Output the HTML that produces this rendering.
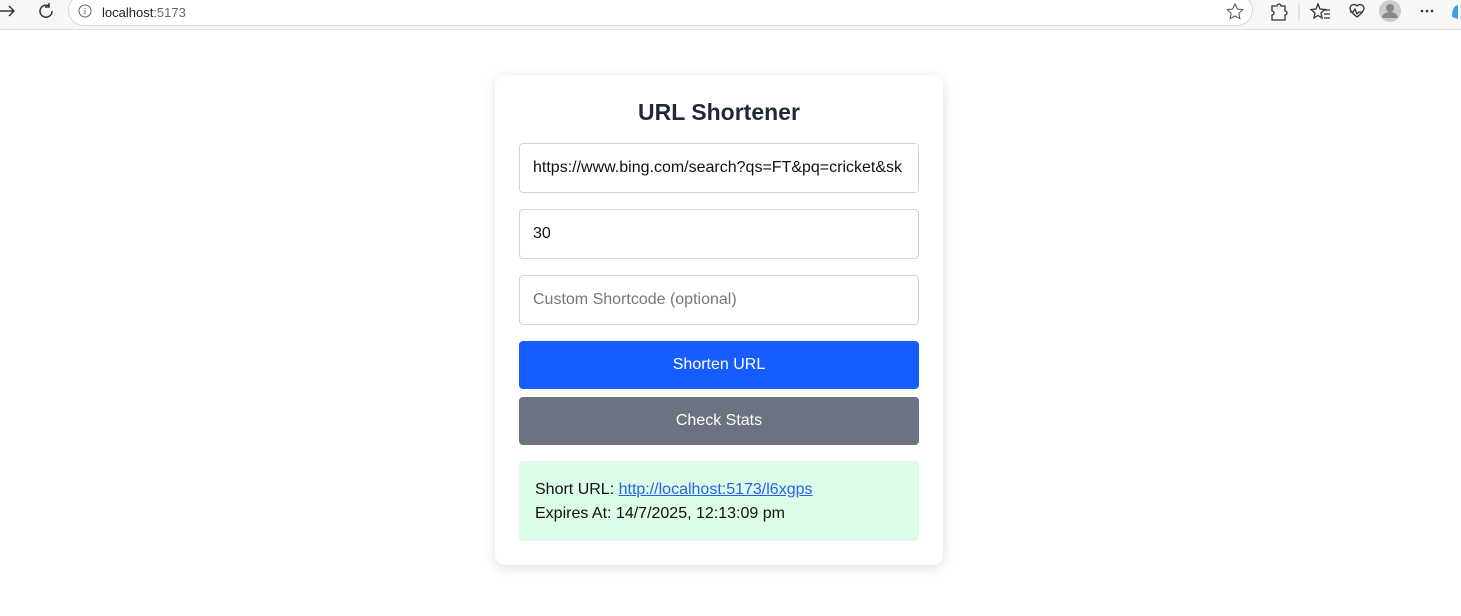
<!DOCTYPE html>
<html><head><meta charset="utf-8"><style>
*{box-sizing:border-box;margin:0;padding:0}
body{width:1461px;height:616px;background:#fff;font-family:"Liberation Sans",sans-serif;position:relative;overflow:hidden}
.bar{position:absolute;left:0;top:0;width:1461px;height:30px;background:#f7f7f7;border-bottom:1px solid #e3e3e3}
.url{position:absolute;left:68px;top:-6px;width:1185px;height:32px;background:#fff;border:1px solid #d6d6d6;border-radius:16px}
.url span{position:absolute;left:33px;top:10px;font-size:13px;color:#222}
.card{position:absolute;left:495px;top:75px;width:448px;height:490px;background:#fff;border-radius:10px;box-shadow:0 3px 12px rgba(0,0,0,.12)}
h1{position:absolute;left:0;width:448px;top:24px;text-align:center;font-size:23px;font-weight:bold;color:#1f2937}
.in{position:absolute;left:24px;width:400px;height:50px;border:1px solid #d1d5db;border-radius:4px;font-size:16px;color:#111;padding:15px 0 0 13px;white-space:nowrap;overflow:hidden}
.btn{position:absolute;left:24px;width:400px;height:48px;border-radius:4px;color:#fff;font-size:16px;text-align:center;line-height:48px}
.res{position:absolute;left:24px;top:386px;width:400px;height:80px;background:#dcfce7;border-radius:4px;padding:17px 16px;font-size:16px;line-height:24px;color:#111}
.res a{color:#2563eb;text-decoration:underline}
</style></head><body>
<div class="bar">
<svg style="position:absolute;left:0;top:0" width="60" height="22"><path d="M0 11h14M9 6l5 5-5 5" stroke="#333" stroke-width="1.5" fill="none"/><path d="M49 6a6 6 0 1 0 3 5M49 3v4h-4" stroke="#333" stroke-width="1.5" fill="none"/></svg>
<div class="url"><svg style="position:absolute;left:9px;top:9px" width="14" height="14"><circle cx="7" cy="7" r="6" stroke="#666" fill="none"/><path d="M7 6v4M7 4v1" stroke="#666"/></svg><span>localhost<span style="position:static;color:#666">:5173</span></span>
<svg style="position:absolute;right:8px;top:8px" width="18" height="18"><path d="M9 1l2.4 5 5.4.6-4 3.7 1.1 5.4L9 13l-4.9 2.7 1.1-5.4-4-3.7 5.4-.6z" stroke="#555" fill="none"/></svg></div>
<svg style="position:absolute;left:1268px;top:0" width="190" height="24"><path d="M4 6h5a2 2 0 0 1 4 0h4v5a2 2 0 0 1 0 4v5H4v-5a2 2 0 0 0 0-4z" stroke="#333" fill="none" stroke-width="1.3"/><path d="M31 3v18" stroke="#ccc"/><path d="M50 4l2 5 5 .5-4 3.5 1 5-4-2.5-4 2.5 1-5-4-3.5 5-.5z M56 10h6M56 14h6M56 18h6" stroke="#333" fill="none" stroke-width="1.3"/><path d="M82 8a4 4 0 0 1 7-2 4 4 0 0 1 7 2c0 4-7 9-7 9s-7-5-7-9zM82 12h3l2-3 2 5 2-2h4" stroke="#333" fill="none" stroke-width="1.3"/><circle cx="122" cy="11" r="11" fill="#ccc"/><circle cx="122" cy="8" r="4" fill="#888"/><path d="M114 18a8 6 0 0 1 16 0z" fill="#888"/><circle cx="154" cy="11" r="1.3" fill="#333"/><circle cx="159" cy="11" r="1.3" fill="#333"/><circle cx="164" cy="11" r="1.3" fill="#333"/><path d="M184 17c0-8 3-12 6-12v14z" fill="#3aa0e8"/></svg>
</div>
<div class="card">
<h1>URL Shortener</h1>
<div class="in" style="top:68px">https://www.bing.com/search?qs=FT&amp;pq=cricket&amp;sk</div>
<div class="in" style="top:134px">30</div>
<div class="in" style="top:200px;color:#777">Custom Shortcode (optional)</div>
<div class="btn" style="top:266px;background:#175cff">Shorten URL</div>
<div class="btn" style="top:322px;background:#6b7280">Check Stats</div>
<div class="res">Short URL: <a>http://localhost:5173/l6xgps</a><br>Expires At: 14/7/2025, 12:13:09 pm</div>
</div>
</body></html>
